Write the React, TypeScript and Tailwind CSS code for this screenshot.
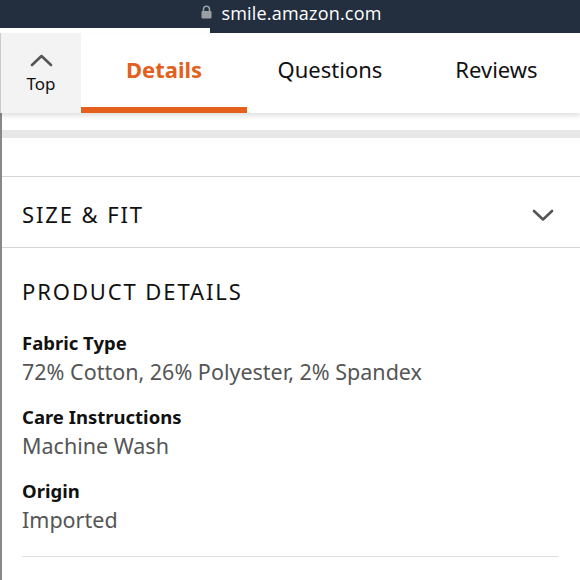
import React from 'react';

const details = [
  { label: 'Fabric Type', value: '72% Cotton, 26% Polyester, 2% Spandex' },
  { label: 'Care Instructions', value: 'Machine Wash' },
  { label: 'Origin', value: 'Imported' },
];

export default function App() {
  return (
    <div className="w-[580px] h-[580px] overflow-hidden bg-white text-[#111] font-['Noto_Sans',sans-serif]">
      {/* browser url bar */}
      <div className="h-[28px] bg-[#232f3e] flex items-center justify-center gap-[9px] pb-[2px] pl-[3px]">
        <svg width="11" height="14" viewBox="0 0 11 14" className="mb-[2px]">
          <path d="M2.5 6V4.2a3 3 0 0 1 6 0V6" fill="none" stroke="#9a9ea5" strokeWidth="1.6" />
          <rect x="0.5" y="6" width="10" height="7.5" rx="1.2" fill="#9a9ea5" />
        </svg>
        <span className="text-[18px] text-white font-['Open_Sans',sans-serif] tracking-[0.2px]">smile.amazon.com</span>
      </div>
      <div className="flex h-[5px]">
        <div className="w-[210px] bg-white" />
        <div className="flex-1 bg-[#232f3e]" />
      </div>

      {/* tab bar */}
      <div className="relative z-10 flex h-[80px] bg-white shadow-[0_3px_5px_rgba(0,0,0,0.12)] border-l border-[#ccc]">
        <div className="w-[80px] bg-[#f3f3f3] flex flex-col items-center pt-[21px]">
          <svg width="23" height="13" viewBox="0 0 23 13" className="ml-[1px]">
            <path d="M2 11 11.5 2 21 11" fill="none" stroke="#555" strokeWidth="2.6" strokeLinecap="round" strokeLinejoin="round" />
          </svg>
          <span className="text-[17px] leading-none mt-[8px] text-[#111]">Top</span>
        </div>
        <div className="w-[166px] flex flex-col">
          <div className="flex-1 flex items-center justify-center pb-[2px] text-[22px] font-bold text-[#e3601d]">Details</div>
          <div className="h-[6px] bg-[#e3601d]" />
        </div>
        <div className="w-[166px] flex items-center justify-center pb-[8px] text-[22px]">Questions</div>
        <div className="flex-1 flex items-center justify-center pb-[8px] text-[22px]">Reviews</div>
      </div>

      <div className="border-l-2 border-[#888] h-[467px]">
        <div className="h-[17px]" />
        <div className="h-[8px] bg-[#e7e7e7]" />
        <div className="h-[38px]" />
        <div className="h-[1px] bg-[#d5d5d5]" />
        <div className="h-[70px] flex items-center justify-between pl-[20px] pr-[26px] pt-[5px]">
          <span className="text-[22px] tracking-[1.9px]">SIZE &amp; FIT</span>
          <svg width="22" height="13" viewBox="0 0 22 13" className="mt-[1px]">
            <path d="M2 2l9 8.5L20 2" fill="none" stroke="#555" strokeWidth="2.6" strokeLinecap="round" strokeLinejoin="round" />
          </svg>
        </div>
        <div className="h-[1px] bg-[#d5d5d5]" />
        <div className="pl-[20px] pr-[20px] pt-[29px]">
          <div className="text-[22px] tracking-[1.9px] leading-[28px]">PRODUCT DETAILS</div>
          <div className="mt-[25px] flex flex-col gap-[15px]">
            {details.map((d) => (
              <div key={d.label}>
                <div className="text-[18.5px] font-bold leading-[25px]">{d.label}</div>
                <div className="text-[21.5px] text-[#555] leading-[34px]">{d.value}</div>
              </div>
            ))}
          </div>
          <div className="mt-[19px] h-[1px] bg-[#ddd] mr-[2px]" />
        </div>
      </div>
    </div>
  );
}
